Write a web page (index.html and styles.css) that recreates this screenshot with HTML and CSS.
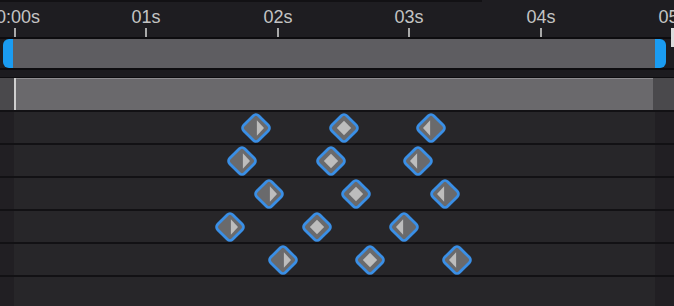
FILE: index.html
```html
<!DOCTYPE html>
<html>
<head>
<meta charset="utf-8">
<link rel="stylesheet" href="styles.css">
</head>
<body>
<div class="timeline">
  <div class="ruler">
    <div class="topline"></div>
    <span class="label first">0:00s</span>
    <span class="tick" style="left:14px"></span>
    <span class="label" style="left:146px">01s</span>
    <span class="tick" style="left:145px"></span>
    <span class="label" style="left:278px">02s</span>
    <span class="tick" style="left:277px"></span>
    <span class="label" style="left:409px">03s</span>
    <span class="tick" style="left:408px"></span>
    <span class="label" style="left:541px">04s</span>
    <span class="tick" style="left:540px"></span>
    <span class="label" style="left:673px">05s</span>
    <span class="endmark"></span>
  </div>
  <div class="hline"></div>
  <div class="scroll">
    <div class="sc-pad"></div>
    <div class="handle left"></div>
    <div class="sc-track"></div>
    <div class="handle right"></div>
    <div class="sc-rest"></div>
  </div>
  <div class="hline"></div>
  <div class="gap"></div>
  <div class="hline thin"></div>
  <div class="workbar">
    <div class="wb-side"></div>
    <div class="wb-mark"></div>
    <div class="wb-area"></div>
    <div class="wb-side end"></div>
  </div>
  <div class="tracks">
    <div class="sep"></div>
    <div class="row">
      <div class="strip"></div>
      <div class="lane">
        <svg class="kf" style="left:242px" viewBox="0 0 30 30"><rect class="kf-body" x="4.4" y="4.4" width="21.2" height="21.2" rx="3.8" transform="rotate(45 15 15)"/><polygon class="kf-fill" points="15.9,7.2 23,15 15.9,22.8"/></svg>
        <svg class="kf" style="left:330px" viewBox="0 0 30 30"><rect class="kf-body" x="4.4" y="4.4" width="21.2" height="21.2" rx="3.8" transform="rotate(45 15 15)"/><polygon class="kf-fill" points="15,7.8 22.2,15 15,22.2 7.8,15"/></svg>
        <svg class="kf" style="left:417px" viewBox="0 0 30 30"><rect class="kf-body" x="4.4" y="4.4" width="21.2" height="21.2" rx="3.8" transform="rotate(45 15 15)"/><polygon class="kf-fill" points="14.1,7.2 7,15 14.1,22.8"/></svg>
      </div>
      <div class="strip end"></div>
    </div>
    <div class="sep"></div>
    <div class="row">
      <div class="strip"></div>
      <div class="lane">
        <svg class="kf" style="left:228px" viewBox="0 0 30 30"><rect class="kf-body" x="4.4" y="4.4" width="21.2" height="21.2" rx="3.8" transform="rotate(45 15 15)"/><polygon class="kf-fill" points="15.9,7.2 23,15 15.9,22.8"/></svg>
        <svg class="kf" style="left:317px" viewBox="0 0 30 30"><rect class="kf-body" x="4.4" y="4.4" width="21.2" height="21.2" rx="3.8" transform="rotate(45 15 15)"/><polygon class="kf-fill" points="15,7.8 22.2,15 15,22.2 7.8,15"/></svg>
        <svg class="kf" style="left:404px" viewBox="0 0 30 30"><rect class="kf-body" x="4.4" y="4.4" width="21.2" height="21.2" rx="3.8" transform="rotate(45 15 15)"/><polygon class="kf-fill" points="14.1,7.2 7,15 14.1,22.8"/></svg>
      </div>
      <div class="strip end"></div>
    </div>
    <div class="sep"></div>
    <div class="row">
      <div class="strip"></div>
      <div class="lane">
        <svg class="kf" style="left:255px" viewBox="0 0 30 30"><rect class="kf-body" x="4.4" y="4.4" width="21.2" height="21.2" rx="3.8" transform="rotate(45 15 15)"/><polygon class="kf-fill" points="15.9,7.2 23,15 15.9,22.8"/></svg>
        <svg class="kf" style="left:342px" viewBox="0 0 30 30"><rect class="kf-body" x="4.4" y="4.4" width="21.2" height="21.2" rx="3.8" transform="rotate(45 15 15)"/><polygon class="kf-fill" points="15,7.8 22.2,15 15,22.2 7.8,15"/></svg>
        <svg class="kf" style="left:431px" viewBox="0 0 30 30"><rect class="kf-body" x="4.4" y="4.4" width="21.2" height="21.2" rx="3.8" transform="rotate(45 15 15)"/><polygon class="kf-fill" points="14.1,7.2 7,15 14.1,22.8"/></svg>
      </div>
      <div class="strip end"></div>
    </div>
    <div class="sep"></div>
    <div class="row">
      <div class="strip"></div>
      <div class="lane">
        <svg class="kf" style="left:216px" viewBox="0 0 30 30"><rect class="kf-body" x="4.4" y="4.4" width="21.2" height="21.2" rx="3.8" transform="rotate(45 15 15)"/><polygon class="kf-fill" points="15.9,7.2 23,15 15.9,22.8"/></svg>
        <svg class="kf" style="left:303px" viewBox="0 0 30 30"><rect class="kf-body" x="4.4" y="4.4" width="21.2" height="21.2" rx="3.8" transform="rotate(45 15 15)"/><polygon class="kf-fill" points="15,7.8 22.2,15 15,22.2 7.8,15"/></svg>
        <svg class="kf" style="left:390px" viewBox="0 0 30 30"><rect class="kf-body" x="4.4" y="4.4" width="21.2" height="21.2" rx="3.8" transform="rotate(45 15 15)"/><polygon class="kf-fill" points="14.1,7.2 7,15 14.1,22.8"/></svg>
      </div>
      <div class="strip end"></div>
    </div>
    <div class="sep"></div>
    <div class="row">
      <div class="strip"></div>
      <div class="lane">
        <svg class="kf" style="left:269px" viewBox="0 0 30 30"><rect class="kf-body" x="4.4" y="4.4" width="21.2" height="21.2" rx="3.8" transform="rotate(45 15 15)"/><polygon class="kf-fill" points="15.9,7.2 23,15 15.9,22.8"/></svg>
        <svg class="kf" style="left:356px" viewBox="0 0 30 30"><rect class="kf-body" x="4.4" y="4.4" width="21.2" height="21.2" rx="3.8" transform="rotate(45 15 15)"/><polygon class="kf-fill" points="15,7.8 22.2,15 15,22.2 7.8,15"/></svg>
        <svg class="kf" style="left:443px" viewBox="0 0 30 30"><rect class="kf-body" x="4.4" y="4.4" width="21.2" height="21.2" rx="3.8" transform="rotate(45 15 15)"/><polygon class="kf-fill" points="14.1,7.2 7,15 14.1,22.8"/></svg>
      </div>
      <div class="strip end"></div>
    </div>
    <div class="sep"></div>
    <div class="row empty">
      <div class="strip"></div>
      <div class="lane"></div>
      <div class="strip end"></div>
    </div>
  </div>
</div>
</body>
</html>
```

FILE: styles.css
```css
html, body {
  margin: 0;
  padding: 0;
  background: #262529;
  overflow: hidden;
}
.timeline {
  width: 674px;
  height: 306px;
  display: flex;
  flex-direction: column;
  font-family: "Liberation Sans", Arial, sans-serif;
  overflow: hidden;
  position: relative;
}
.ruler {
  position: relative;
  height: 37px;
  background: #1e1d21;
  flex: none;
}
.topline {
  position: absolute;
  left: 0;
  top: 0;
  width: 482px;
  height: 2px;
  background: #121114;
}
.label {
  position: absolute;
  top: 8px;
  font-size: 18px;
  line-height: 18px;
  color: #c4c4c4;
  transform: translateX(-50%);
  white-space: nowrap;
}
.label.first {
  left: -4px;
  transform: none;
}
.tick {
  position: absolute;
  top: 28px;
  width: 2px;
  height: 9px;
  background: #a9a9a9;
}
.endmark {
  position: absolute;
  left: 671px;
  top: 28px;
  width: 4px;
  height: 19px;
  background: #dcdcdc;
  z-index: 3;
}
.hline {
  height: 2px;
  background: #0d0c0f;
  flex: none;
}
.hline.thin {
  height: 1px;
}
.scroll {
  display: flex;
  height: 29px;
  flex: none;
  background: #1e1d21;
}
.sc-pad {
  width: 3px;
}
.handle {
  width: 10px;
  background: #1a9cf2;
}
.handle.left {
  border-radius: 6px 0 0 6px;
}
.handle.right {
  width: 11px;
  border-radius: 0 6px 6px 0;
}
.sc-track {
  flex: 1;
  background: #5e5d61;
}
.sc-rest {
  width: 8px;
}
.gap {
  height: 7px;
  background: #1c1b1f;
  flex: none;
}
.workbar {
  display: flex;
  height: 32px;
  flex: none;
}
.wb-side {
  width: 14px;
  background: #4a494c;
}
.wb-side.end {
  width: 21px;
}
.wb-mark {
  width: 2px;
  background: #cfcfcf;
}
.wb-area {
  flex: 1;
  background: #6a696c;
  border-top: 1px solid #8e8d90;
}
.tracks {
  display: flex;
  flex-direction: column;
  flex: 1;
}
.sep {
  height: 2px;
  background: #121114;
  flex: none;
}
.row {
  display: flex;
  height: 31px;
  flex: none;
}
.row.empty {
  flex: 1;
}
.strip {
  width: 14px;
  background: #211f23;
}
.strip.end {
  width: 19px;
}
.lane {
  flex: 1;
  position: relative;
  background: #272629;
}
.kf {
  position: absolute;
  top: 0.5px;
  width: 30px;
  height: 30px;
  margin-left: -15px;
  overflow: visible;
}
.kf-body {
  fill: #6a6a6c;
  stroke: #3a8fe6;
  stroke-width: 2.8;
}
.kf-fill {
  fill: #bdbdbd;
}
```
